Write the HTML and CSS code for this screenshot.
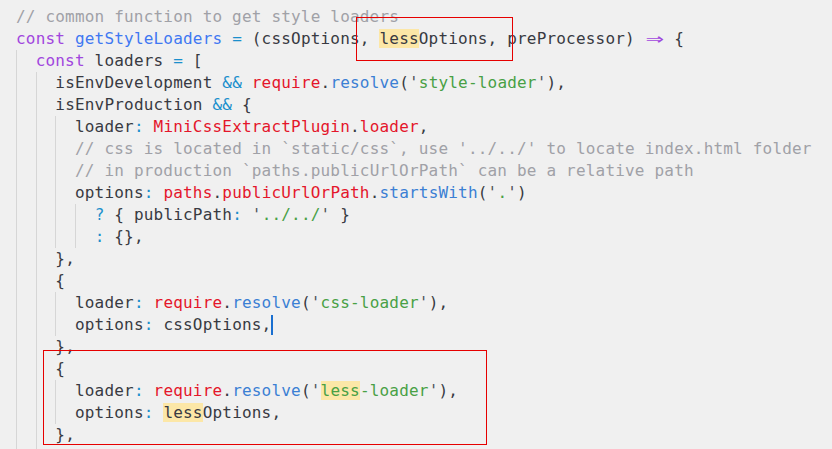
FILE: index.html
```html
<!DOCTYPE html>
<html>
<head>
<meta charset="utf-8">
<link rel="stylesheet" href="styles.css">
</head>
<body>
<div class="editor">
  <div class="code">
    <div class="ln"><span class="c">// common function to get style loaders</span></div>
    <div class="ln"><span class="k">const</span> <span class="fn">getStyleLoaders</span> <span class="op">=</span> (cssOptions, <span class="hl">less</span>Options, preProcessor) <span class="arrow"><span class="arrow-glyph">⇒</span></span> {</div>
    <div class="ln"><span class="ig">  </span><span class="k">const</span> loaders <span class="op">=</span> [</div>
    <div class="ln"><span class="ig">  </span><span class="ig">  </span>isEnvDevelopment <span class="op">&amp;&amp;</span> <span class="r">require</span>.<span class="m">resolve</span>(<span class="q">'</span><span class="s">style-loader</span><span class="q">'</span>),</div>
    <div class="ln"><span class="ig">  </span><span class="ig">  </span>isEnvProduction <span class="op">&amp;&amp;</span> {</div>
    <div class="ln"><span class="ig">  </span><span class="ig">  </span><span class="ig">  </span>loader<span class="op">:</span> <span class="r">MiniCssExtractPlugin</span>.<span class="r">loader</span>,</div>
    <div class="ln"><span class="ig">  </span><span class="ig">  </span><span class="ig">  </span><span class="c">// css is located in `static/css`, use '../../' to locate index.html folder</span></div>
    <div class="ln"><span class="ig">  </span><span class="ig">  </span><span class="ig">  </span><span class="c">// in production `paths.publicUrlOrPath` can be a relative path</span></div>
    <div class="ln"><span class="ig">  </span><span class="ig">  </span><span class="ig">  </span>options<span class="op">:</span> <span class="r">paths</span>.<span class="r">publicUrlOrPath</span>.<span class="m">startsWith</span>(<span class="q">'</span><span class="s">.</span><span class="q">'</span>)</div>
    <div class="ln"><span class="ig">  </span><span class="ig">  </span><span class="ig">  </span><span class="ig">  </span><span class="op">?</span> { publicPath<span class="op">:</span> <span class="q">'</span><span class="s">../../</span><span class="q">'</span> }</div>
    <div class="ln"><span class="ig">  </span><span class="ig">  </span><span class="ig">  </span><span class="ig">  </span><span class="op">:</span> {},</div>
    <div class="ln"><span class="ig">  </span><span class="ig">  </span>},</div>
    <div class="ln"><span class="ig">  </span><span class="ig">  </span>{</div>
    <div class="ln"><span class="ig">  </span><span class="ig">  </span><span class="ig">  </span>loader<span class="op">:</span> <span class="r">require</span>.<span class="m">resolve</span>(<span class="q">'</span><span class="s">css-loader</span><span class="q">'</span>),</div>
    <div class="ln"><span class="ig">  </span><span class="ig">  </span><span class="ig">  </span>options<span class="op">:</span> cssOptions,<span class="cursor"></span></div>
    <div class="ln"><span class="ig">  </span><span class="ig">  </span>},</div>
    <div class="ln"><span class="ig">  </span><span class="ig">  </span>{</div>
    <div class="ln"><span class="ig">  </span><span class="ig">  </span><span class="ig">  </span>loader<span class="op">:</span> <span class="r">require</span>.<span class="m">resolve</span>(<span class="q">'</span><span class="s"><span class="hl">less</span>-loader</span><span class="q">'</span>),</div>
    <div class="ln"><span class="ig">  </span><span class="ig">  </span><span class="ig">  </span>options<span class="op">:</span> <span class="hl">less</span>Options,</div>
    <div class="ln"><span class="ig">  </span><span class="ig">  </span>},</div>
    <div class="ln"><span class="ig">  </span><span class="ig">  </span>{</div>
  </div>
  <div class="mark mark-top"></div>
  <div class="mark mark-bottom"></div>
</div>
</body>
</html>
```
FILE: styles.css
```css
html, body {
  margin: 0;
  padding: 0;
  background: #f0f0f0;
  overflow: hidden;
}

.editor {
  position: relative;
  width: 832px;
  height: 449px;
  overflow: hidden;
  background: #f0f0f0;
}

.code {
  padding: 6px 0 0 16px;
  font-family: "DejaVu Sans Mono", "Liberation Mono", monospace;
  font-size: 16px;
  letter-spacing: 0.19px;
  color: #383a42;
}

.ln {
  height: 22px;
  line-height: 22px;
  white-space: pre;
}

.ig {
  display: inline-block;
  height: 22px;
  vertical-align: top;
  box-shadow: inset 1px 0 0 #d6d6d6;
}

.c { color: #a0a1a7; }
.k { color: #a146de; }
.fn { color: #4078f2; }
.op { color: #1b8fcc; }
.r { color: #e4162b; }
.m { color: #3b7fd4; }
.s { color: #48a045; }
.q { color: #50535a; }

.hl {
  background: #fce7a7;
}

.arrow {
  display: inline-block;
  width: 19.64px;
  text-align: center;
  color: #a146de;
  letter-spacing: 0;
}

.arrow-glyph {
  display: inline-block;
  transform: scale(1.9, 1.25);
}

.cursor {
  display: inline-block;
  width: 2px;
  height: 20px;
  margin-right: -2px;
  vertical-align: top;
  margin-top: 1px;
  background: #1a6fd0;
}

.mark {
  position: absolute;
  border: 1px solid #e60000;
  box-sizing: border-box;
}

.mark-top {
  left: 356px;
  top: 17px;
  width: 157px;
  height: 44px;
}

.mark-bottom {
  left: 43px;
  top: 350px;
  width: 444px;
  height: 95px;
}
```
